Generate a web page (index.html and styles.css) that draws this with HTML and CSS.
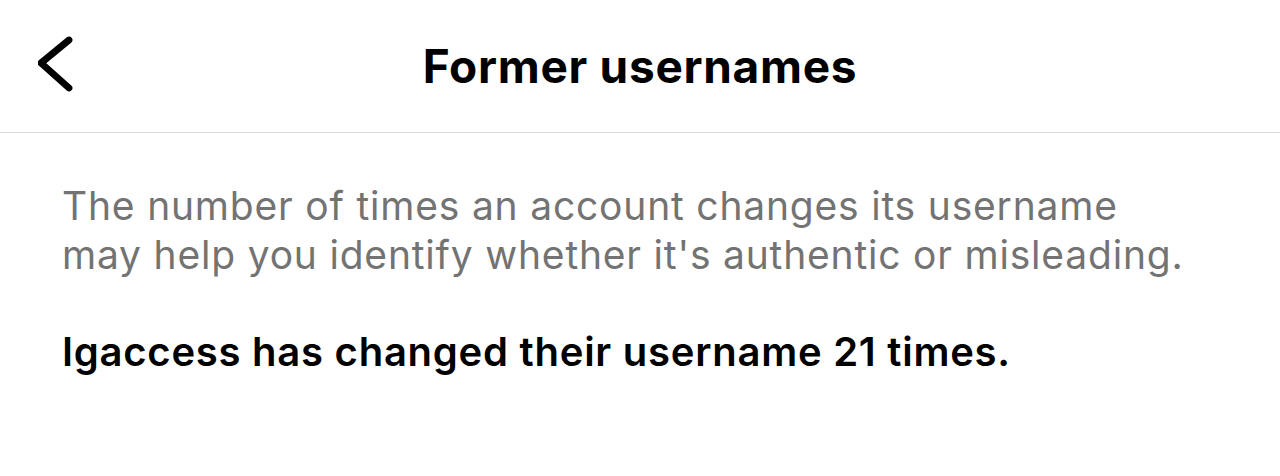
FILE: index.html
```html
<!DOCTYPE html>
<html lang="en">
<head>
<meta charset="utf-8">
<link rel="stylesheet" href="styles.css">
</head>
<body>
<div class="screen">
  <header class="topbar">
    <button class="back" aria-label="Back">
      <svg width="40" height="64" viewBox="0 0 40 64">
        <path d="M31 8 L3 31 L31 56" fill="none" stroke="#000" stroke-width="6.8" stroke-linecap="round" stroke-linejoin="round"/>
      </svg>
    </button>
    <h1 class="title">Former usernames</h1>
    <span class="spacer"></span>
  </header>
  <main class="content">
    <p class="desc">The number of times an account changes its username may help you identify whether it's authentic or misleading.</p>
    <p class="count">Igaccess has changed their username 21 times.</p>
  </main>
</div>
</body>
</html>
```
FILE: styles.css
```css
html, body {
  margin: 0;
  padding: 0;
  background: #fff;
}
body {
  font-family: Inter, "Noto Sans", sans-serif;
  color: #000;
}
.screen {
  width: 1280px;
  height: 476px;
  overflow: hidden;
}
.topbar {
  height: 133px;
  border-bottom: 1px solid #dbdbdb;
  display: grid;
  grid-template-columns: 120px 1fr 120px;
  align-items: center;
  box-sizing: border-box;
}
.back {
  border: 0;
  background: none;
  padding: 0 0 0 38px;
  margin: 0;
  display: flex;
  align-items: center;
  justify-content: flex-start;
  height: 100%;
}
.back svg {
  display: block;
  margin-top: -4px;
}
.title {
  margin: 0;
  text-align: center;
  font-size: 46px;
  font-weight: 700;
  letter-spacing: 0.7px;
}
.content {
  padding: 48px 62px 0;
}
.desc {
  margin: 0;
  font-size: 39px;
  line-height: 49px;
  letter-spacing: 0.8px;
  color: #737373;
  max-width: 1142px;
}
.count {
  margin: 48px 0 0;
  font-size: 40px;
  font-weight: 600;
  letter-spacing: 0.75px;
  line-height: 49px;
}
```
